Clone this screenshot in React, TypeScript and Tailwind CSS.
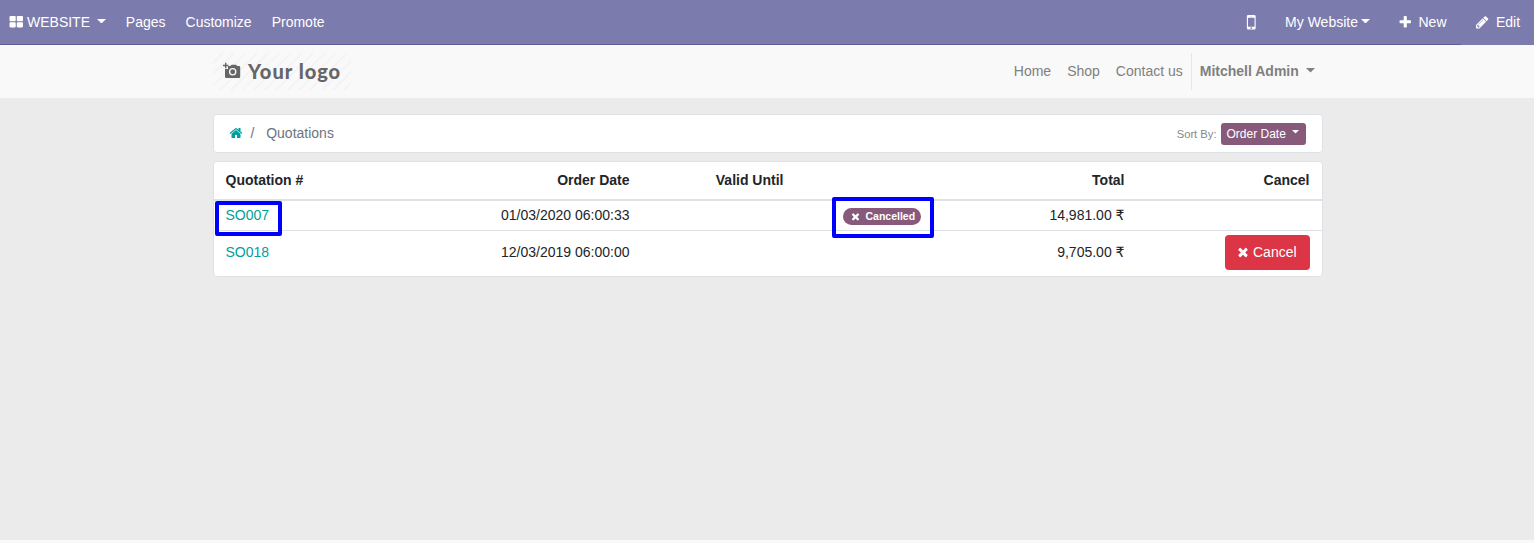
import type { ReactNode } from "react";

const ICONS = {
  thLarge:
    "M832 1024v384q0 52-38 90t-90 38h-512q-52 0-90-38t-38-90v-384q0-52 38-90t90-38h512q52 0 90 38t38 90zm0-768v384q0 52-38 90t-90 38h-512q-52 0-90-38t-38-90v-384q0-52 38-90t90-38h512q52 0 90 38t38 90zm896 768v384q0 52-38 90t-90 38h-512q-52 0-90-38t-38-90v-384q0-52 38-90t90-38h512q52 0 90 38t38 90zm0-768v384q0 52-38 90t-90 38h-512q-52 0-90-38t-38-90v-384q0-52 38-90t90-38h512q52 0 90 38t38 90z",
  times:
    "M1490 1322q0 40-28 68l-136 136q-28 28-68 28t-68-28l-294-294-294 294q-28 28-68 28t-68-28l-136-136q-28-28-28-68t28-68l294-294-294-294q-28-28-28-68t28-68l136-136q28-28 68-28t68 28l294 294 294-294q28-28 68-28t68 28l136 136q28 28 28 68t-28 68l-294 294 294 294q28 28 28 68z",
  plus: "M1600 736v192q0 40-28 68t-68 28h-416v416q0 40-28 68t-68 28h-192q-40 0-68-28t-28-68v-416h-416q-40 0-68-28t-28-68v-192q0-40 28-68t68-28h416v-416q0-40 28-68t68-28h192q40 0 68 28t28 68v416h416q40 0 68 28t28 68z",
  pencil:
    "M491 1536l91-91-235-235-91 91v107h128v128h107zm523-928q0-22-22-22-10 0-17 7l-542 542q-7 7-7 17 0 22 22 22 10 0 17-7l542-542q7-7 7-17zm-54-192l416 416-832 832h-416v-416zm683 96q0 53-37 90l-166 166-416-416 166-165q36-38 90-38 53 0 91 38l235 234q37 39 37 91z",
  home: "M1472 992v480q0 26-19 45t-45 19h-384v-384h-256v384h-384q-26 0-45-19t-19-45v-480q0-1 .5-3t.5-3l575-474 575 474q1 2 1 6zm223-69l-62 74q-8 9-21 11h-3q-13 0-21-7l-692-577-692 577q-12 8-24 7-13-2-21-11l-62-74q-8-10-7-23.5t11-21.5l719-599q32-26 76-26t76 26l244 204v-195q0-14 9-23t23-9h192q14 0 23 9t9 23v408l219 182q10 8 11 21.5t-7 23.5z",
  mobile:
    "M976 1408q0-33-23.500-56.500t-56.500-23.500-56.500 23.500-23.500 56.500 23.500 56.500 56.500 23.500 56.500-23.500 23.500-56.500zm208-160v-704q0-13-9.500-22.500t-22.500-9.500h-512q-13 0-22.500 9.500t-9.500 22.500v704q0 13 9.500 22.500t22.500 9.500h512q13 0 22.500-9.500t9.500-22.500zm-192-848q0-16-16-16h-160q-16 0-16 16t16 16h160q16 0 16-16zm288-16v1024q0 52-38 90t-90 38h-512q-52 0-90-38t-38-90v-1024q0-52 38-90t90-38h512q52 0 90 38t38 90z",
};

function Icon({ name, className }: { name: keyof typeof ICONS; className: string }) {
  return (
    <svg viewBox="0 0 1792 1792" fill="currentColor" className={`shrink-0 ${className}`}>
      <path d={ICONS[name]} />
    </svg>
  );
}

function Caret({ className }: { className: string }) {
  return (
    <svg viewBox="0 0 18 9" fill="currentColor" className={`shrink-0 ${className}`}>
      <path d="M0 0h18L9 9z" />
    </svg>
  );
}

function TopBar() {
  return (
    <header className="flex h-[45px] bg-[#7c7bad] text-white">
      <div className="flex flex-1 items-center border-b border-[#5f5e97] pl-[9px]">
        <Icon name="thLarge" className="size-[14.500px]" />
        <span className="ml-[3.500px]">WEBSITE</span>
        <Caret className="mb-[2px] ml-[7px] h-[4.500px] w-[9px]" />
        <span className="ml-[19.800px]">Pages</span>
        <span className="ml-5">Customize</span>
        <span className="ml-5">Promote</span>
        <Icon name="mobile" className="ml-auto size-[20.500px]" />
        <span className="ml-[24px]">My Website</span>
        <Caret className="mb-[2px] ml-[3px] h-[4.500px] w-[9px]" />
        <Icon name="plus" className="ml-[28px] size-[14.500px]" />
        <span className="ml-[6px] mr-[14.500px]">New</span>
      </div>
      <div className="flex w-[73px] items-center pb-px pl-[14px]">
        <Icon name="pencil" className="size-[14.500px]" />
        <span className="ml-[6.500px]">Edit</span>
      </div>
    </header>
  );
}

function Logo() {
  return (
    <div className="flex h-[37px] w-[138px] items-center bg-[repeating-linear-gradient(135deg,#f9f9f9_0,#f9f9f9_6px,#f4f4f4_6px,#f4f4f4_8px)] pl-[10px] text-[#666]">
      <svg viewBox="0 0 18 17" className="mb-[2px] h-[17px] w-[18px]" fill="none" stroke="currentColor">
        <path
          d="M5 4h2.300l1.300-1.200h4.400L14.300 4H16q1.200 0 1.200 1.200v9.600q0 1.200-1.200 1.200H3.200q-1.200 0-1.200-1.200V7h3z"
          fill="currentColor"
          stroke="none"
        />
        <circle cx="9.700" cy="9.800" r="3.100" stroke="#f9f9f9" strokeWidth="1.300" />
        <path d="M0 3.500h5.400M2.700.8v5.400" strokeWidth="1.400" />
      </svg>
      <span className="mb-[2px] ml-[7px] whitespace-nowrap font-[Lato,sans-serif] text-[20px] font-black leading-none tracking-[1px]">
        Your logo
      </span>
    </div>
  );
}

function SiteNav() {
  return (
    <nav className="h-[53px] bg-[#f9f9f9] text-[#808080]">
      <div className="ml-[213px] flex h-full w-[1110px] items-center">
        <Logo />
        <span className="ml-auto">Home</span>
        <span className="ml-4">Shop</span>
        <span className="ml-4">Contact us</span>
        <span className="ml-2 h-[37px] w-px bg-[#e6e6e6]" />
        <span className="ml-2 font-bold">Mitchell Admin</span>
        <Caret className="mb-[2px] ml-[7px] mr-[8.200px] h-[4.500px] w-[9px]" />
      </div>
    </nav>
  );
}

function Breadcrumb() {
  return (
    <div className="flex h-[39px] items-center rounded border border-[#dee2e6] bg-white pl-[15px] pr-4">
      <Icon name="home" className="mb-px size-[14px] text-[#00a09d]" />
      <span className="ml-[7.500px] text-[#6c757d]">/</span>
      <span className="ml-[11.800px] text-[#6c757d]">Quotations</span>
      <span className="ml-auto pt-px text-[11.200px] text-[#888]">Sort By:</span>
      <span className="ml-[4.500px] flex h-[22px] w-[85px] items-center rounded-[3px] bg-[#875a7b] pl-[5.500px] text-[12px] text-white">
        <span className="pt-px">Order Date</span>
        <Caret className="mb-[3px] ml-[6px] h-[3.500px] w-[7px]" />
      </span>
    </div>
  );
}

function Highlight({ className }: { className: string }) {
  return <span className={`absolute rounded-[2px] border-4 border-[#0000ff] ${className}`} />;
}

function Row({ children, className }: { children: ReactNode; className: string }) {
  return (
    <div className={`grid grid-cols-[200px_215px_208px_160px_116px_1fr] pl-[11.500px] pr-[12.500px] ${className}`}>
      {children}
    </div>
  );
}

function Amount({ value }: { value: string }) {
  return (
    <span className="text-right">
      {value} <span className="font-['DejaVu_Sans',sans-serif] leading-none">₹</span>
    </span>
  );
}

function QuotationTable() {
  return (
    <div className="mt-2 h-[116px] overflow-hidden rounded border border-[#dee2e6] bg-white text-[#212529]">
      <Row className="h-[39px] items-center border-b-2 border-[#dee2e6] font-bold">
        <span>Quotation #</span>
        <span className="pr-[11px] text-right">Order Date</span>
        <span className="pl-[75.300px]">Valid Until</span>
        <span />
        <span className="text-right">Total</span>
        <span className="text-right">Cancel</span>
      </Row>
      <Row className="h-[30px] items-center border-b border-[#dee2e6]">
        <span className="text-[#00a09d]">SO007</span>
        <span className="pr-[11px] text-right">01/03/2020 06:00:33</span>
        <span />
        <span className="flex">
          <span className="ml-[-6px] mt-px flex h-[17px] w-[78px] items-center rounded-full bg-[#875a7b] pl-[7px] text-[10.500px] font-bold text-white">
            <Icon name="times" className="size-[11px]" />
            <span className="ml-[5px]">Cancelled</span>
          </span>
        </span>
        <Amount value="14,981.00" />
        <span />
      </Row>
      <Row className="h-[43px] items-center">
        <span className="text-[#00a09d]">SO018</span>
        <span className="pr-[11px] text-right">12/03/2019 06:00:00</span>
        <span />
        <span />
        <Amount value="9,705.00" />
        <span className="flex justify-end">
          <span className="flex h-[35px] w-[85px] items-center rounded bg-[#dc3545] pl-[11.500px] text-white">
            <Icon name="times" className="mb-px size-[14px]" />
            <span className="ml-[3px]">Cancel</span>
          </span>
        </span>
      </Row>
    </div>
  );
}

export default function App() {
  return (
    <div className="relative h-[543px] w-[1534px] overflow-hidden bg-[#f9f9f9] font-['Liberation_Sans',Arial,sans-serif] text-[14px] leading-[21px]">
      <TopBar />
      <SiteNav />
      <main className="h-[442px] bg-[#ebebeb] pt-4">
        <div className="ml-[213px] w-[1110px]">
          <Breadcrumb />
          <QuotationTable />
        </div>
      </main>
      <Highlight className="left-[215px] top-[201px] h-[35px] w-[67px]" />
      <Highlight className="left-[832px] top-[197px] h-[41px] w-[102px]" />
    </div>
  );
}
